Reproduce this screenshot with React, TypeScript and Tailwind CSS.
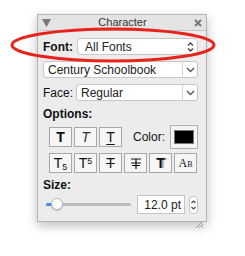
import React from 'react';

const font = { fontFamily: '"Liberation Sans", Arial, sans-serif' };

function Btn({ children }: { children: React.ReactNode }) {
  return (
    <div className="w-[23px] h-[20px] flex items-center justify-center border border-[#a8a8a8] bg-[#f6f6f6] text-[13px] leading-none text-[#111]">
      {children}
    </div>
  );
}

function Chevron() {
  return (
    <svg width="9" height="6" viewBox="0 0 9 6">
      <path d="M1 1 L4.5 4.5 L8 1" fill="none" stroke="#555" strokeWidth="1.4" />
    </svg>
  );
}

export default function App() {
  return (
    <div className="relative w-[245px] h-[256px] bg-white overflow-hidden" style={font}>
      <div className="ml-[37px] mt-[14px] w-[170px] h-[208px] flex flex-col bg-[#ececec] border border-[#b4b4b4] shadow-[0_4px_10px_rgba(0,0,0,0.25)]">
        {/* title bar */}
        <div className="h-[16px] flex items-center justify-between px-[4px] bg-[#e4e4e4] border-b border-[#c4c4c4]">
          <svg width="9" height="8" viewBox="0 0 9 8">
            <path d="M0 0 H9 L4.5 8 Z" fill="#777" />
          </svg>
          <span className="text-[11px] text-[#333]">Character</span>
          <svg width="8" height="8" viewBox="0 0 8 8">
            <path d="M1 1 L7 7 M7 1 L1 7" stroke="#777" strokeWidth="2" />
          </svg>
        </div>

        <div className="flex flex-col pl-[5px] pr-[8px]">
          {/* Font row */}
          <div className="mt-[7px] h-[17px] flex items-center">
            <span className="text-[12px] font-bold text-[#111] w-[34px]">Font:</span>
            <div className="flex-1 h-[17px] flex items-center justify-between pl-[7px] pr-[3px] bg-white border border-[#c6c6c6] rounded-[4px] text-[12px] text-[#222]">
              <span>All Fonts</span>
              <svg width="7" height="12" viewBox="0 0 7 12">
                <path d="M1 4.5 L3.5 2 L6 4.5 M1 7.5 L3.5 10 L6 7.5" fill="none" stroke="#444" strokeWidth="1.3" />
              </svg>
            </div>
          </div>

          {/* Family combo */}
          <div className="mt-[6px] h-[17px] flex bg-white border border-[#c6c6c6] rounded-[3px] text-[12px] text-[#222]">
            <span className="flex-1 flex items-center pl-[4px]">Century Schoolbook</span>
            <div className="w-[15px] flex items-center justify-center border-l border-[#d6d6d6]">
              <Chevron />
            </div>
          </div>

          {/* Face row */}
          <div className="mt-[6px] h-[17px] flex items-center">
            <span className="text-[12px] text-[#111] w-[33px]">Face:</span>
            <div className="flex-1 h-[17px] flex bg-white border border-[#c6c6c6] rounded-[3px] text-[12px] text-[#222]">
              <span className="flex-1 flex items-center pl-[4px]">Regular</span>
              <div className="w-[15px] flex items-center justify-center border-l border-[#d6d6d6]">
                <Chevron />
              </div>
            </div>
          </div>

          {/* Options */}
          <div className="mt-[6px] text-[12px] font-bold text-[#111] leading-[14px]">Options:</div>
          <div className="mt-[4px] pl-[6px] flex items-center">
            <div className="flex gap-[2px]">
              <Btn><span className="font-bold text-[14px]">T</span></Btn>
              <Btn><span className="italic text-[14px] text-[#333]">T</span></Btn>
              <Btn><span className="text-[14px] underline underline-offset-2">T</span></Btn>
            </div>
            <span className="ml-[11px] text-[12px] text-[#111]">Color:</span>
            <div className="ml-[5px] w-[30px] h-[24px] flex items-center justify-center border border-[#b0b0b0] bg-[#f4f4f4]">
              <div className="w-[20px] h-[14px] bg-black border border-[#777]" />
            </div>
          </div>
          <div className="mt-[4px] pl-[6px] flex gap-[2px]">
            <Btn><span className="text-[14px]">T<sub className="text-[9px]">5</sub></span></Btn>
            <Btn><span className="text-[14px]">T<sup className="text-[9px]">5</sup></span></Btn>
            <Btn><span className="text-[14px] line-through">T</span></Btn>
            <Btn>
              <svg width="12" height="11" viewBox="0 0 12 11">
                <path d="M1 1 H11 M6 1 V11 M1 5 H11 M2 7.5 H10" stroke="#111" strokeWidth="1.2" fill="none" />
              </svg>
            </Btn>
            <Btn>
              <span className="font-bold text-[14px] [text-shadow:2px_0_1px_#9a9a9a]">T</span>
            </Btn>
            <Btn>
              <span className="text-[12px] [font-variant-caps:small-caps]" style={{ fontFamily: '"Liberation Serif", serif' }}>
                Ab
              </span>
            </Btn>
          </div>

          {/* Size */}
          <div className="mt-[5px] text-[12px] font-bold text-[#111] leading-[14px]">Size:</div>
          <div className="mt-[3px] h-[19px] flex items-center">
            <div className="relative ml-[3px] w-[85px] h-[3px] rounded-full bg-[#bdbdbd]">
              <div className="absolute left-0 top-0 h-[3px] w-[8px] rounded-full bg-[#3b8cf2]" />
              <div className="absolute left-[5px] top-[-5px] w-[12px] h-[12px] rounded-full bg-white border border-[#b8b8b8] shadow-[0_1px_1px_rgba(0,0,0,0.2)]" />
            </div>
            <div className="ml-[6px] w-[48px] h-[19px] flex items-center justify-end pr-[3px] bg-white border border-[#c4c4c4] text-[12px] text-[#222]">
              12.0 pt
            </div>
            <div className="ml-[4px] w-[9px] h-[18px] flex items-center justify-center bg-white border border-[#c4c4c4] rounded-[4px]">
              <svg width="7" height="12" viewBox="0 0 7 12">
                <path d="M1.5 4 L3.5 2 L5.5 4 M1.5 8 L3.5 10 L5.5 8" fill="none" stroke="#444" strokeWidth="1.1" />
              </svg>
            </div>
          </div>

          {/* resize grip */}
          <div className="mt-[6px] flex justify-end">
            <svg width="8" height="8" viewBox="0 0 8 8" className="mr-[-5px]">
              <path d="M8 1 L1 8 M8 4 L4 8 M8 7 L7 8" stroke="#999" strokeWidth="1" />
            </svg>
          </div>
        </div>
      </div>

      {/* red annotation ellipse */}
      <svg className="absolute left-0 top-0" width="245" height="256">
        <ellipse cx="113" cy="45" rx="101" ry="16" fill="none" stroke="#e8231c" strokeWidth="3" />
      </svg>
    </div>
  );
}
